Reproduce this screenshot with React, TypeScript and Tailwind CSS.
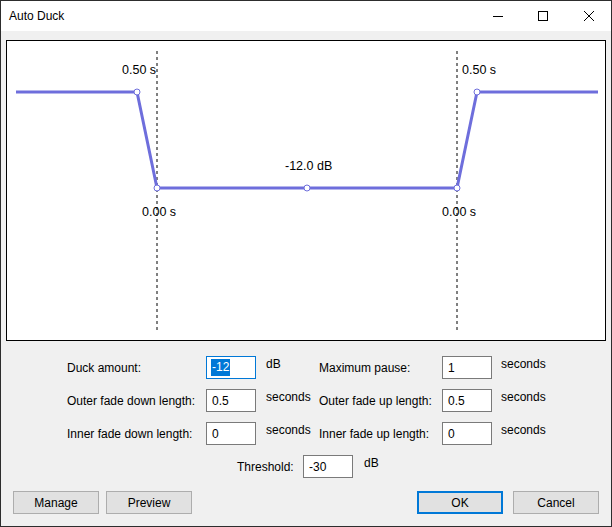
import React from 'react'

const ui = { fontFamily: '"Liberation Sans", Arial, sans-serif' }

function Field({ value, focused = false }: { value: string; focused?: boolean }) {
  return (
    <div
      className={
        'w-[50px] h-[23px] bg-white border flex items-center pl-[5px] text-[12px] ' +
        (focused ? 'border-[#0078d7]' : 'border-[#7a7a7a]')
      }
    >
      {focused ? <span className="bg-[#0078d7] text-white leading-[17px] px-[1px] -ml-[1px]">{value}</span> : value}
    </div>
  )
}

function Row({
  label,
  value,
  unit,
  label2,
  value2,
  unit2,
  focused,
}: {
  label: string
  value: string
  unit: string
  label2: string
  value2: string
  unit2: string
  focused?: boolean
}) {
  return (
    <div className="flex h-[23px]">
      <div className="w-[139px] flex items-center">{label}</div>
      <Field value={value} focused={focused} />
      <div className="w-[63px] pl-[10px] leading-[16px]">{unit}</div>
      <div className="w-[123px] flex items-center">{label2}</div>
      <Field value={value2} />
      <div className="pl-[9px] leading-[16px]">{unit2}</div>
    </div>
  )
}

function Btn({ children, primary = false }: { children: React.ReactNode; primary?: boolean }) {
  return (
    <button
      className={
        'w-[86px] h-[23px] bg-[#e1e1e1] text-[12px] text-black flex items-center justify-center ' +
        (primary ? 'border-2 border-[#0078d7]' : 'border border-[#adadad]')
      }
    >
      {children}
    </button>
  )
}

function Graph() {
  const blue = '#6e6edc'
  const pts = [
    [130, 51],
    [150, 147],
    [300, 147],
    [450, 147],
    [470, 51],
  ]
  return (
    <svg width="598" height="299" className="block">
      <line x1="150" y1="10" x2="150" y2="292" stroke="#000" strokeDasharray="3 3" />
      <line x1="450" y1="10" x2="450" y2="292" stroke="#000" strokeDasharray="3 3" />
      <polyline
        points="9,51 130,51 150,147 450,147 470,51 591,51"
        fill="none"
        stroke={blue}
        strokeWidth="3"
      />
      {pts.map(([x, y]) => (
        <circle key={x} cx={x} cy={y} r="3" fill="#fff" stroke={blue} strokeWidth="1" />
      ))}
      <g fontFamily='"Liberation Sans", Arial, sans-serif' fontSize="12.5" fill="#000">
        <text x="115" y="33">0.50 s</text>
        <text x="135" y="175">0.00 s</text>
        <text x="278" y="129">-12.0 dB</text>
        <text x="455" y="33">0.50 s</text>
        <text x="435" y="175">0.00 s</text>
      </g>
    </svg>
  )
}

export default function App() {
  return (
    <div
      className="w-[612px] h-[527px] border border-[#2d2d2d] bg-[#f0f0f0] flex flex-col text-[12px] text-black"
      style={ui}
    >
      {/* title bar */}
      <div className="h-[30px] bg-white flex items-center pl-[8px] shrink-0">
        <span className="flex-1">Auto Duck</span>
        <svg width="120" height="30" className="mr-[10px]">
          <line x1="12" y1="15.5" x2="22" y2="15.5" stroke="#000" />
          <rect x="57.5" y="10.5" width="9" height="9" fill="none" stroke="#000" />
          <path d="M103 10 L113 20 M113 10 L103 20" stroke="#000" strokeWidth="1" />
        </svg>
      </div>

      <div className="px-[5px] pt-[9px]">
        <div className="w-[600px] h-[301px] border border-black bg-white">
          <Graph />
        </div>
      </div>

      <div className="pl-[66px] pt-[15px] flex flex-col gap-[10px]">
        <Row label="Duck amount:" value="-12" unit="dB" label2="Maximum pause:" value2="1" unit2="seconds" focused />
        <Row
          label="Outer fade down length:"
          value="0.5"
          unit="seconds"
          label2="Outer fade up length:"
          value2="0.5"
          unit2="seconds"
        />
        <Row
          label="Inner fade down length:"
          value="0"
          unit="seconds"
          label2="Inner fade up length:"
          value2="0"
          unit2="seconds"
        />
      </div>

      <div className="flex h-[23px] mt-[10px] pl-[236px]">
        <div className="w-[66px] flex items-center">Threshold:</div>
        <div className="w-[50px] h-[23px] bg-white border border-[#7a7a7a] flex items-center pl-[5px]">-30</div>
        <div className="pl-[11px] leading-[16px]">dB</div>
      </div>

      <div className="flex mt-[13px] px-[12px] gap-[7px]">
        <Btn>Manage</Btn>
        <Btn>Preview</Btn>
        <div className="flex-1" />
        <div className="flex gap-[10px]">
          <Btn primary>OK</Btn>
          <Btn>Cancel</Btn>
        </div>
      </div>
    </div>
  )
}
